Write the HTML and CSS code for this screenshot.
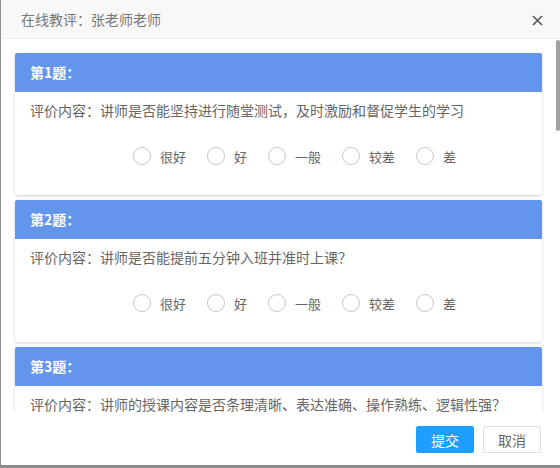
FILE: index.html
```html
<!DOCTYPE html>
<html lang="zh">
<head>
    <meta charset="UTF-8">
    <meta name="viewport" content="width=device-width, initial-scale=1.0">
    <title>在线教评</title>
    <link rel="stylesheet" href="styles.css">
</head>
<body>
    <div class="layer">
        <div class="layer-title">
            在线教评：张老师老师
            <span class="layer-close">
                <svg width="11" height="11" viewBox="0 0 11 11"><path d="M1 1L10 10M10 1L1 10" stroke="#555" stroke-width="1.6" fill="none"/></svg>
            </span>
        </div>

        <div class="layer-content">
            <div class="card">
                <div class="card-head">第1题：</div>
                <div class="card-body">
                    <p class="question">评价内容：讲师是否能坚持进行随堂测试，及时激励和督促学生的学习</p>
                    <div class="options">
                        <label class="opt"><i class="radio"></i>很好</label>
                        <label class="opt"><i class="radio"></i>好</label>
                        <label class="opt"><i class="radio"></i>一般</label>
                        <label class="opt"><i class="radio"></i>较差</label>
                        <label class="opt"><i class="radio"></i>差</label>
                    </div>
                </div>
            </div>
            <div class="card">
                <div class="card-head">第2题：</div>
                <div class="card-body">
                    <p class="question">评价内容：讲师是否能提前五分钟入班并准时上课？</p>
                    <div class="options">
                        <label class="opt"><i class="radio"></i>很好</label>
                        <label class="opt"><i class="radio"></i>好</label>
                        <label class="opt"><i class="radio"></i>一般</label>
                        <label class="opt"><i class="radio"></i>较差</label>
                        <label class="opt"><i class="radio"></i>差</label>
                    </div>
                </div>
            </div>
            <div class="card">
                <div class="card-head">第3题：</div>
                <div class="card-body">
                    <p class="question">评价内容：讲师的授课内容是否条理清晰、表达准确、操作熟练、逻辑性强？</p>
                </div>
            </div>
        </div>
        <div class="scroll-thumb"></div>

        <div class="layer-btns">
            <a class="btn btn-primary">提交</a>
            <a class="btn">取消</a>
        </div>
    </div>
</body>
</html>
```

FILE: styles.css
```css
html, body {
    margin: 0;
    padding: 0;
    height: 100%;
    overflow: hidden;
}
body {
    font-family: "Noto Sans CJK SC", "Liberation Sans", sans-serif;
    background-color: #fff;
}
.layer {
    height: 468px;
    box-sizing: border-box;
    border-left: 1px solid #8f8f8f;
    border-bottom: 3px solid #8c8c8c;
    display: flex;
    flex-direction: column;
    background-color: #fff;
    position: relative;
}
.layer-title {
    height: 38px;
    line-height: 38px;
    flex: none;
    padding-left: 20px;
    font-size: 14px;
    color: #777;
    background-color: #f8f8f8;
    border-bottom: 1px solid #eee;
    position: relative;
}
.layer-close {
    position: absolute;
    right: 17px;
    top: 15px;
    width: 11px;
    height: 11px;
    line-height: 0;
}
.layer-content {
    height: 373px;
    flex: none;
    overflow: hidden;
    box-sizing: border-box;
    padding: 14px 18px 0 14px;
}
.scroll-thumb {
    position: absolute;
    right: 0;
    top: 40px;
    width: 4px;
    height: 91px;
    background-color: #a0a0a0;
    border-radius: 2px;
}
.card {
    background-color: #fff;
    border-radius: 2px;
    box-shadow: 0 1px 3px rgba(0,0,0,0.18);
    margin-bottom: 5px;
    overflow: hidden;
}
.card-head {
    height: 39px;
    line-height: 39px;
    padding-left: 15px;
    background-color: #6495ed;
    color: #fff;
    font-size: 14px;
    font-weight: bold;
}
.card-body {
    padding: 10px 15px 29px;
}
.question {
    margin: 0;
    line-height: 16px;
    font-size: 14px;
    color: #666;
}
.options {
    display: flex;
    align-items: center;
    height: 20px;
    margin-top: 28px;
    padding-left: 103px;
    gap: 21px;
}
.opt {
    display: flex;
    align-items: center;
    gap: 9px;
    font-size: 13px;
    color: #666;
}
.radio {
    display: block;
    width: 16px;
    height: 16px;
    border: 1.5px solid #c6c6c6;
    border-radius: 50%;
}
.layer-btns {
    flex: 1;
    display: flex;
    justify-content: flex-end;
    align-items: flex-start;
    gap: 9px;
    padding: 14px 19px 0 0;
}
.btn {
    display: block;
    width: 58px;
    height: 27px;
    line-height: 27px;
    box-sizing: border-box;
    text-align: center;
    font-size: 14px;
    color: #666;
    border: 1px solid #dedede;
    border-radius: 2px;
    background-color: #fff;
}
.btn-primary {
    background-color: #1e9fff;
    border-color: #1e9fff;
    color: #fff;
}
```
